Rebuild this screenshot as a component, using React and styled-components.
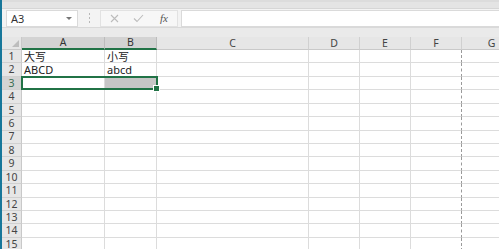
import React from 'react'
import styled, { createGlobalStyle } from 'styled-components'

const GlobalStyle = createGlobalStyle`
  html, body {
    margin: 0;
    padding: 0;
    overflow: hidden;
    background: #ffffff;
  }
  body {
    font-family: "Noto Sans", "Noto Sans CJK SC", sans-serif;
  }
`

const GREEN = '#217346'
const ROW_H = 13.43

const columns = [
  { name: 'A', width: 83 },
  { name: 'B', width: 52 },
  { name: 'C', width: 152 },
  { name: 'D', width: 51 },
  { name: 'E', width: 51 },
  { name: 'F', width: 51, pageBreak: true },
  { name: 'G', width: 60 },
]

const data = {
  1: { A: '大写', B: '小写' },
  2: { A: 'ABCD', B: 'abcd' },
}

const rows = Array.from({ length: 15 }, (_, i) => i + 1)

const Window = styled.div`
  display: flex;
  width: 499px;
  height: 249px;
  overflow: hidden;
  background: #e9e9e9;
`

const SideStrip = styled.div`
  width: 2px;
  flex: none;
  background: #17779a;
`

const Main = styled.div`
  flex: 1;
  display: flex;
  flex-direction: column;
  min-width: 0;
`

const TopBand = styled.div`
  height: 9px;
  flex: none;
  background: #e4e4e4;
  border-top: 2px solid #dcdcdc;
  border-bottom: 1px solid #d6d6d6;
  box-sizing: border-box;
`

const FormulaRow = styled.div`
  display: flex;
  align-items: center;
  height: 19px;
  flex: none;
  background: #f3f3f3;
  border-bottom: 1px solid #d9d9d9;
  box-sizing: border-box;
  padding-left: 4px;
`

const NameBox = styled.div`
  display: flex;
  align-items: center;
  justify-content: space-between;
  width: 72px;
  height: 17px;
  box-sizing: border-box;
  background: #ffffff;
  border: 1px solid #dadada;
  padding: 0 5px 0 4px;
  font-size: 11px;
  color: #333;
`

const Caret = styled.span`
  width: 0;
  height: 0;
  border-left: 3px solid transparent;
  border-right: 3px solid transparent;
  border-top: 3px solid #777;
`

const Grip = styled.div`
  width: 22px;
  display: flex;
  flex-direction: column;
  align-items: center;
  gap: 2px;

  > span {
    width: 1px;
    height: 2px;
    background: #b8b8b8;
  }
`

const FxBox = styled.div`
  display: flex;
  align-items: center;
  width: 78px;
  height: 17px;
  box-sizing: border-box;
  background: #f7f7f7;
  border: 1px solid #e2e2e2;
  padding-left: 9px;
  gap: 14px;
  color: #b9b9b9;
  font-size: 12px;
`

const FxLabel = styled.span`
  font-family: "Liberation Serif", serif;
  font-style: italic;
  font-size: 11px;
  color: #555;
  margin-left: 2px;
`

const FormulaInput = styled.div`
  flex: 1;
  height: 17px;
  margin-left: 3px;
  box-sizing: border-box;
  background: #ffffff;
  border: 1px solid #dadada;
  border-right: none;
`

const Spacer = styled.div`
  height: 9px;
  flex: none;
  background: #eaeaea;
`

const SheetArea = styled.div`
  position: relative;
  flex: 1;
  background: #ffffff;
`

const Grid = styled.div`
  display: grid;
  grid-template-columns: 20px ${columns.map((c) => `${c.width}px`).join(' ')};
  grid-template-rows: 13px repeat(${rows.length}, ${ROW_H}px);
`

const Corner = styled.div`
  position: relative;
  background: #e6e6e6;
  border-right: 1px solid #c9c9c9;
  border-bottom: 1px solid #c9c9c9;
  box-sizing: border-box;

  &::after {
    content: '';
    position: absolute;
    right: 2px;
    bottom: 2px;
    width: 0;
    height: 0;
    border-left: 7px solid transparent;
    border-bottom: 7px solid #bdbdbd;
  }
`

const ColHeader = styled.div`
  display: flex;
  align-items: center;
  justify-content: center;
  box-sizing: border-box;
  font-size: 10.5px;
  line-height: 1;
  color: ${(p) => (p.$selected ? '#333' : '#444')};
  background: ${(p) => (p.$selected ? '#d3d3d3' : '#e6e6e6')};
  border-right: 1px solid ${(p) => (p.$selected ? '#bcbcbc' : '#d0d0d0')};
  border-bottom: ${(p) => (p.$selected ? `2px solid ${GREEN}` : '1px solid #c9c9c9')};
`

const RowHeader = styled.div`
  display: flex;
  align-items: center;
  justify-content: center;
  box-sizing: border-box;
  font-size: 10.5px;
  line-height: 1;
  overflow: hidden;
  color: ${(p) => (p.$selected ? '#3a6d50' : '#444')};
  background: ${(p) => (p.$selected ? '#d3d3d3' : '#e6e6e6')};
  border-bottom: 1px solid #d0d0d0;
  border-right: 1px solid ${(p) => (p.$selected ? GREEN : '#c9c9c9')};
`

const Cell = styled.div`
  display: flex;
  align-items: center;
  box-sizing: border-box;
  padding-left: 2px;
  font-size: 11px;
  line-height: 1;
  color: #222;
  white-space: nowrap;
  overflow: hidden;
  background: ${(p) => (p.$shaded ? '#c6c6c6' : '#ffffff')};
  border-bottom: 1px solid #dcdcdc;
  border-right: ${(p) => (p.$pageBreak ? '1px dashed #9a9a9a' : '1px solid #dcdcdc')};
`

const Selection = styled.div`
  position: absolute;
  left: 19px;
  top: ${13 + ROW_H * 2 - 1}px;
  width: ${83 + 52 + 2}px;
  height: ${ROW_H + 1}px;
  border: 2px solid ${GREEN};
  box-sizing: border-box;
  pointer-events: none;

  &::after {
    content: '';
    position: absolute;
    right: -4px;
    bottom: -4px;
    width: 5px;
    height: 5px;
    background: ${GREEN};
    border: 1px solid #ffffff;
  }
`

function CrossIcon() {
  return (
    <svg width="9" height="9" viewBox="0 0 9 9">
      <path d="M1 1L8 8M8 1L1 8" stroke="#bcbcbc" strokeWidth="1.1" fill="none" />
    </svg>
  )
}

function CheckIcon() {
  return (
    <svg width="11" height="9" viewBox="0 0 11 9">
      <path d="M1 4.5L4 7.5L10 1" stroke="#bcbcbc" strokeWidth="1.1" fill="none" />
    </svg>
  )
}

export default function App() {
  return (
    <>
      <GlobalStyle />
      <Window>
        <SideStrip />
        <Main>
          <TopBand />
          <FormulaRow>
            <NameBox>
              A3
              <Caret />
            </NameBox>
            <Grip>
              <span />
              <span />
              <span />
            </Grip>
            <FxBox>
              <CrossIcon />
              <CheckIcon />
              <FxLabel>fx</FxLabel>
            </FxBox>
            <FormulaInput />
          </FormulaRow>
          <Spacer />
          <SheetArea>
            <Grid>
              <Corner />
              {columns.map((c) => (
                <ColHeader key={c.name} $selected={c.name === 'A' || c.name === 'B'}>
                  {c.name}
                </ColHeader>
              ))}
              {rows.map((r) => (
                <React.Fragment key={r}>
                  <RowHeader $selected={r === 3}>{r}</RowHeader>
                  {columns.map((c) => (
                    <Cell
                      key={c.name}
                      $shaded={r === 3 && c.name === 'B'}
                      $pageBreak={c.pageBreak}
                    >
                      {data[r]?.[c.name] ?? ''}
                    </Cell>
                  ))}
                </React.Fragment>
              ))}
            </Grid>
            <Selection />
          </SheetArea>
        </Main>
      </Window>
    </>
  )
}
